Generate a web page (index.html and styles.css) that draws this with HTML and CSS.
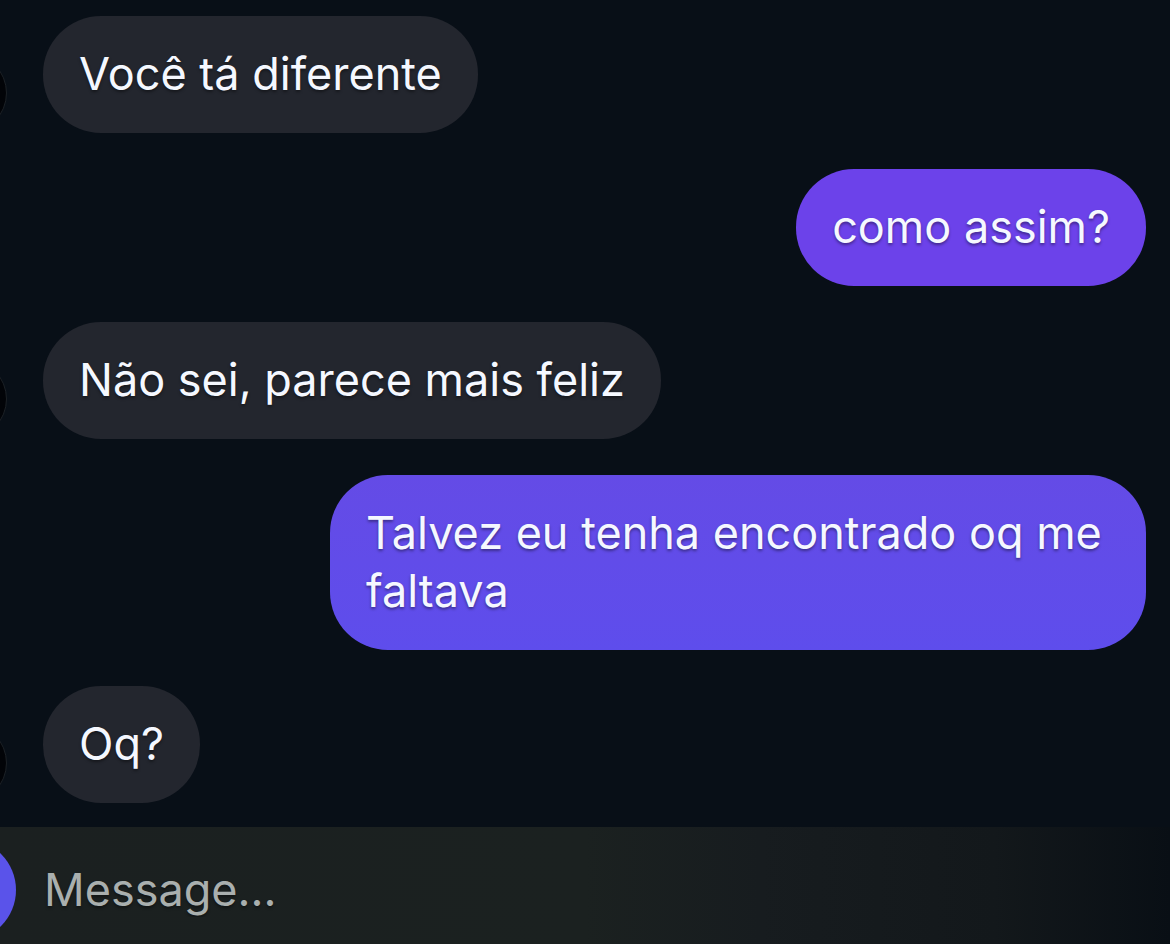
FILE: index.html
```
<!DOCTYPE html>
<html lang="pt-BR">
<head>
    <meta charset="UTF-8">
    <meta name="viewport" content="width=device-width, initial-scale=1.0">
    <title>Chat</title>
    <link rel="stylesheet" href="styles.css">
</head>
<body>
    <main class="messages">
        <div class="message received">
            <span class="avatar"></span>
            <p class="bubble">Você tá diferente</p>
        </div>
        <div class="message sent">
            <p class="bubble bubble-violet">como assim?</p>
        </div>
        <div class="message received">
            <span class="avatar"></span>
            <p class="bubble">Não sei, parece mais feliz</p>
        </div>
        <div class="message sent">
            <p class="bubble bubble-indigo">Talvez eu tenha encontrado oq me faltava</p>
        </div>
        <div class="message received">
            <span class="avatar"></span>
            <p class="bubble">Oq?</p>
        </div>
    </main>

    <form class="composer">
        <button type="button" class="camera-button" aria-label="Camera"></button>
        <input type="text" class="composer-input" placeholder="Message..." aria-label="Message">
    </form>
</body>
</html>
```

FILE: styles.css
```
* {
    box-sizing: border-box;
}
body {
    margin: 0;
    min-height: 100vh;
    display: flex;
    flex-direction: column;
    overflow-x: hidden;
    background-color: #080f17;
    color: #f5f8ff;
    font-family: Inter, "Liberation Sans", sans-serif;
    font-size: 45px;
    line-height: 58px;
}
.messages {
    flex: 1;
    display: flex;
    flex-direction: column;
    gap: 36px;
    padding: 16px 24px 24px 0;
}
.message {
    display: flex;
    align-items: flex-end;
}
/* avatars are mostly scrolled off the left edge */
.received {
    gap: 36px;
    margin-left: -73px;
}
.sent {
    justify-content: flex-end;
}
.avatar {
    flex: none;
    width: 80px;
    height: 80px;
    border: 1px solid #1c2126;
    border-radius: 50%;
    background-color: #020408;
}
.bubble {
    margin: 0;
    max-width: 816px;
    padding: 29px 36px 30px;
    border-radius: 58px;
    background-color: #23262e;
    text-shadow: 0 2px 3px rgba(0, 0, 0, 0.4);
}
.bubble-violet {
    background-color: #6c42ea;
}
.bubble-indigo {
    background: linear-gradient(#644be6, #5e4dec);
}
.composer {
    display: flex;
    align-items: center;
    gap: 28px;
    height: 117px;
    padding: 8px 24px 0 0;
    background: linear-gradient(90deg, #1b2020 0%, #1b2120 50%, #171c1f 65%, #13181b 85%, #090f15 100%);
}
.camera-button {
    flex: none;
    width: 102px;
    height: 102px;
    margin-left: -86px;
    border: none;
    border-radius: 50%;
    background-color: #5a53ea;
    cursor: pointer;
}
.composer-input {
    flex: 1;
    min-width: 0;
    padding: 0;
    border: none;
    outline: none;
    background: none;
    color: #f5f8ff;
    font: inherit;
    text-shadow: 0 2px 3px rgba(0, 0, 0, 0.4);
}
.composer-input::placeholder {
    color: #a9afae;
    opacity: 1;
}
```
